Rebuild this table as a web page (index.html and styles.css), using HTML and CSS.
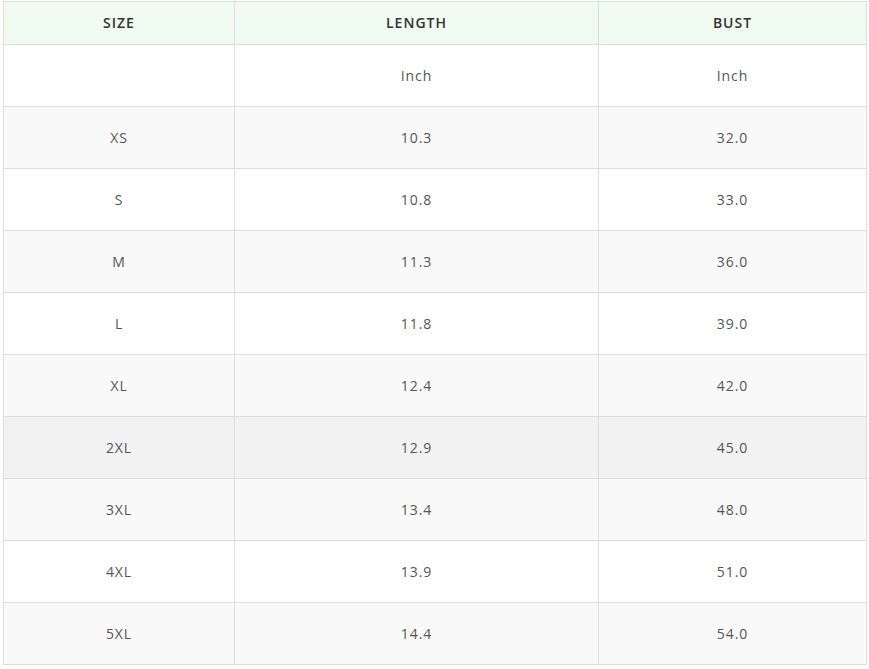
FILE: index.html
```html
<!DOCTYPE html>
<html lang="en">
<head>
<meta charset="utf-8">
<title>Size chart</title>
<link rel="stylesheet" href="styles.css">
</head>
<body>
<div class="wrap">
<table class="size-table">
  <colgroup>
    <col class="c1"><col class="c2"><col class="c3">
  </colgroup>
  <thead>
    <tr><th>SIZE</th><th>LENGTH</th><th>BUST</th></tr>
  </thead>
  <tbody>
    <tr class="odd"><td></td><td>Inch</td><td>Inch</td></tr>
    <tr class="even"><td>XS</td><td>10.3</td><td>32.0</td></tr>
    <tr class="odd"><td>S</td><td>10.8</td><td>33.0</td></tr>
    <tr class="even"><td>M</td><td>11.3</td><td>36.0</td></tr>
    <tr class="odd"><td>L</td><td>11.8</td><td>39.0</td></tr>
    <tr class="even"><td>XL</td><td>12.4</td><td>42.0</td></tr>
    <tr class="odd hover"><td>2XL</td><td>12.9</td><td>45.0</td></tr>
    <tr class="even"><td>3XL</td><td>13.4</td><td>48.0</td></tr>
    <tr class="odd"><td>4XL</td><td>13.9</td><td>51.0</td></tr>
    <tr class="even"><td>5XL</td><td>14.4</td><td>54.0</td></tr>
  </tbody>
</table>
</div>
</body>
</html>
```
FILE: styles.css
```css
html, body {
  margin: 0;
  padding: 0;
  background: #fff;
}
.wrap {
  padding: 1px 3px 0 3px;
}
.size-table {
  border-collapse: collapse;
  table-layout: fixed;
  width: 863px;
  font-family: "Open Sans", "Noto Sans", sans-serif;
  font-size: 14px;
  color: #555;
}
.c1 { width: 231px; }
.c2 { width: 364px; }
.c3 { width: 268px; }
.size-table th,
.size-table td {
  border: 1px solid #dedede;
  text-align: center;
  padding: 0;
}
.size-table th {
  height: 40px;
  padding-bottom: 2px;
  background: #effaf0;
  font-weight: 600;
  color: #333;
  font-size: 14px;
  letter-spacing: 1px;
}
.size-table td {
  height: 61px;
  letter-spacing: 0.9px;
}
.size-table tr.odd td { background: #fff; }
.size-table tr.even td { background: #f9f9f9; }
.size-table tr.hover td { background: #f2f2f2; }
```
